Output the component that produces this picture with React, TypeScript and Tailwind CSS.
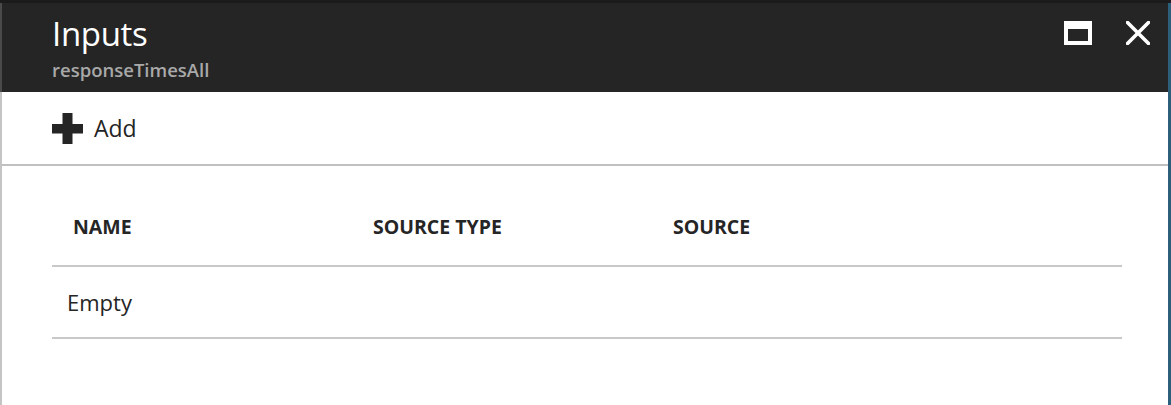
const columns = ['NAME', 'SOURCE TYPE', 'SOURCE'];

function PlusGlyph() {
  return (
    <svg width="31" height="31" viewBox="0 0 31 31" aria-hidden="true">
      <rect x="10.5" y="0" width="10" height="31" fill="#252525" />
      <rect x="0" y="11" width="31" height="9.5" fill="#252525" />
    </svg>
  );
}

function CloseGlyph() {
  return (
    <svg width="24" height="24" viewBox="0 0 24 24" aria-hidden="true">
      <path d="M1.5 1.5 L22.5 22.5 M22.5 1.5 L1.5 22.5" stroke="#ffffff" strokeWidth="3.6" strokeLinecap="square" />
    </svg>
  );
}

export default function App() {
  return (
    <div className="flex h-[405px] w-[1171px] flex-col overflow-hidden bg-white font-['Open_Sans','Noto_Sans',sans-serif] text-[#252525]">
      <div className="h-[3px] shrink-0 bg-[#1b1b1b]" />
      <div className="flex min-h-0 flex-1">
        <section className="flex min-w-0 flex-1 flex-col">
          <header className="flex h-[89px] shrink-0 items-start justify-between border-l-2 border-[#4a4a4a] bg-[#252525]">
            <div className="pl-[50px] pt-[14px]">
              <h1 className="text-[33px] leading-none font-normal tracking-[-0.01em] text-white">Inputs</h1>
              <div className="mt-[11px] text-[18.5px] leading-none font-semibold text-[#a9a9a9]">responseTimesAll</div>
            </div>
            <div className="flex items-center gap-[34px] pr-[18px] pt-[18px]">
              <button type="button" className="h-[24px] w-[28px] border-x-4 border-b-4 border-t-8 border-white" aria-label="Maximize" />
              <button type="button" className="flex h-[24px] w-[24px] items-center justify-center" aria-label="Close">
                <CloseGlyph />
              </button>
            </div>
          </header>

          <div className="flex h-[74px] shrink-0 items-center gap-[11px] border-b-2 border-l-2 border-b-[#c0c0c0] border-l-[#c4c4c4] pl-[50px]">
            <PlusGlyph />
            <span className="text-[23px] leading-none">Add</span>
          </div>

          <div className="flex-1 border-l-2 border-[#c4c4c4] pl-[50px] pr-[46px] pt-[23px]">
            <div className="grid h-[78px] grid-cols-[300px_300px_1fr] items-center border-b-2 border-[#c8c8c8]">
              {columns.map((label) => (
                <div key={label} className="pl-[21px] text-[19.5px] leading-none font-bold">
                  {label}
                </div>
              ))}
            </div>
            <div className="flex h-[72px] items-center border-b-2 border-[#c8c8c8] pl-[15px] text-[22px]">
              Empty
            </div>
          </div>
        </section>
        <div className="w-[3px] shrink-0 bg-[#2b5f7c]" />
      </div>
    </div>
  );
}
